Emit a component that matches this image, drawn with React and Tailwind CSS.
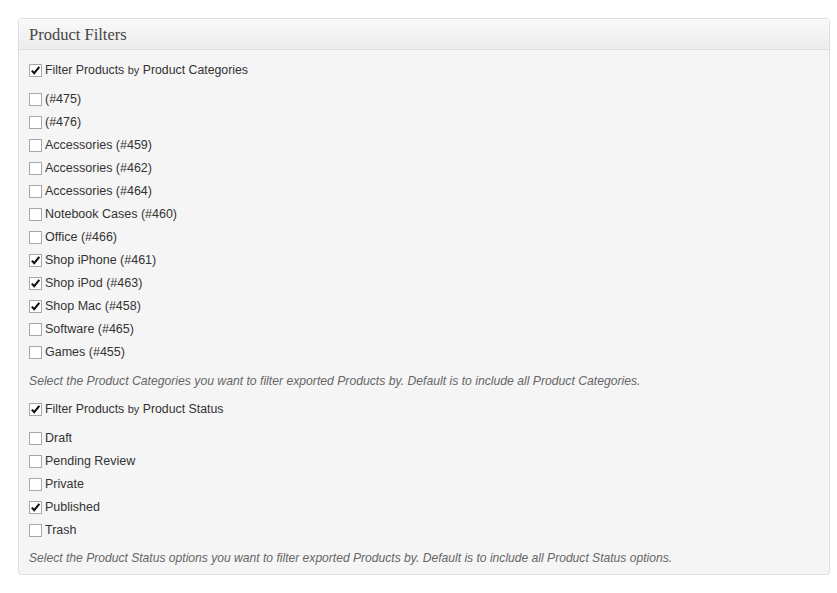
const categories = [
    { label: "(#475)", checked: false },
    { label: "(#476)", checked: false },
    { label: "Accessories (#459)", checked: false },
    { label: "Accessories (#462)", checked: false },
    { label: "Accessories (#464)", checked: false },
    { label: "Notebook Cases (#460)", checked: false },
    { label: "Office (#466)", checked: false },
    { label: "Shop iPhone (#461)", checked: true },
    { label: "Shop iPod (#463)", checked: true },
    { label: "Shop Mac (#458)", checked: true },
    { label: "Software (#465)", checked: false },
    { label: "Games (#455)", checked: false }
];

const statuses = [
    { label: "Draft", checked: false },
    { label: "Pending Review", checked: false },
    { label: "Private", checked: false },
    { label: "Published", checked: true },
    { label: "Trash", checked: false }
];

function Box({ checked }) {
    return (
        <span className="w-[13px] h-[13px] border border-[#a8a8a8] bg-white flex items-center justify-center shrink-0">
            {checked && (
                <svg width="11" height="11" viewBox="0 0 11 11">
                    <path d="M1.8 5.6 L4.2 8.2 L9.3 1.8" fill="none" stroke="#111" strokeWidth="2.1" />
                </svg>
            )}
        </span>
    );
}

function Row({ checked, children, className = "" }) {
    return (
        <div className={`h-[23px] flex items-center gap-[3px] ${className}`}>
            <Box checked={checked} />
            <span>{children}</span>
        </div>
    );
}

export default function App() {
    return (
        <div className="bg-white min-h-[593px] pt-[18px] pl-[18px]">
            <div
                className="w-[812px] border border-[#dfdfdf] rounded-[3px] bg-[#f5f5f5] text-[12.5px] text-[#333]"
                style={{ fontFamily: "'Liberation Sans', Arial, sans-serif" }}
            >

                <div className="h-[31px] flex items-center px-[10px] pt-[2px] border-b border-[#dfdfdf] bg-gradient-to-b from-[#f9f9f9] to-[#ececec]">
                    <h3
                        className="text-[16.5px] text-[#464646]"
                        style={{ fontFamily: "'Liberation Serif', 'DejaVu Serif', serif" }}
                    >
                        Product Filters
                    </h3>
                </div>

                <div className="px-[10px] pt-[9px] pb-[4px]">

                    <Row checked className="text-[12.3px]">
                        Filter Products <span className="text-[11px]">by</span> Product Categories
                    </Row>

                    <div className="mt-[6px]">
                        {categories.map((c) => (
                            <Row key={c.label} checked={c.checked}>
                                {c.label}
                            </Row>
                        ))}
                    </div>

                    <p className="h-[23px] mt-[6px] flex items-center italic text-[12.2px] text-[#666]">
                        Select the Product Categories you want to filter exported Products by. Default is to include all Product Categories.
                    </p>

                    <Row checked className="mt-[5px] text-[12.3px]">
                        Filter Products <span className="text-[11px]">by</span> Product Status
                    </Row>

                    <div className="mt-[6px]">
                        {statuses.map((s) => (
                            <Row key={s.label} checked={s.checked}>
                                {s.label}
                            </Row>
                        ))}
                    </div>

                    <p className="h-[23px] mt-[5px] flex items-center italic text-[12.1px] text-[#666]">
                        Select the Product Status options you want to filter exported Products by. Default is to include all Product Status options.
                    </p>

                </div>
            </div>
        </div>
    );
}
